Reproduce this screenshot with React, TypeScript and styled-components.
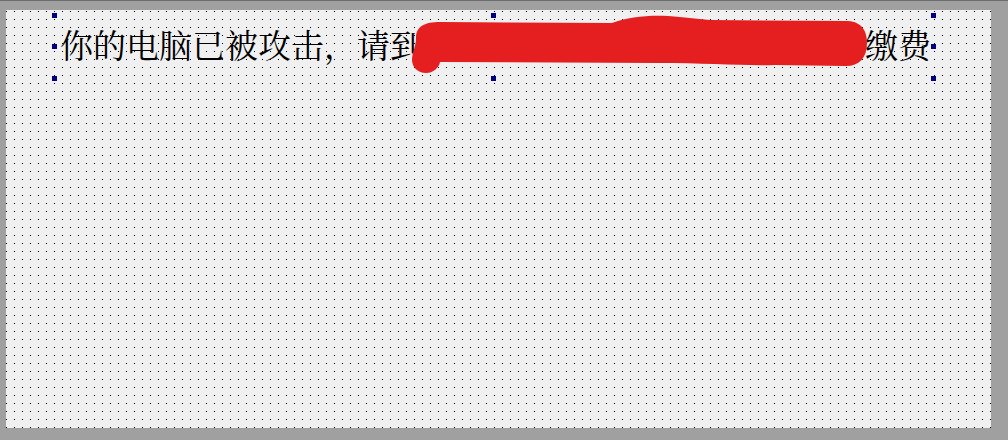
import React from "react";
import styled, { createGlobalStyle } from "styled-components";

const GlobalStyle = createGlobalStyle`
  html, body {
    margin: 0;
    padding: 0;
    background: #a0a0a0;
  }
  #root {
    width: 1008px;
    height: 440px;
  }
`;

const Workspace = styled.div`
  box-sizing: border-box;
  width: 1008px;
  height: 440px;
  background: #a0a0a0;
  border-top: 1px solid #6c6c6c;
  padding: 9px 0 0 6px;
  display: flex;
  align-items: flex-start;
`;

const FormCanvas = styled.div`
  box-sizing: border-box;
  width: 985px;
  height: 418px;
  background-color: #f0f0f0;
  background-image: conic-gradient(from 270deg at 1px 1px, #000 90deg, transparent 0);
  background-size: 8px 8px;
  background-position: 0 1px;
  padding: 5px 0 0 48px;
  display: flex;
  align-items: flex-start;
`;

const SelectedLabel = styled.div`
  position: relative;
  box-sizing: border-box;
  width: 879px;
  height: 63px;
  padding: 12px 0 0 6px;
  display: flex;
  align-items: flex-start;
  font-family: "Noto Serif CJK SC", "Noto Sans CJK SC", "Liberation Serif", serif;
  font-size: 33px;
  line-height: 33px;
  color: #000;
  white-space: nowrap;
`;

const Redacted = styled.span<{ $w: number }>`
  display: inline-block;
  width: ${(p) => p.$w}px;
  flex: none;
`;

const Handle = styled.span<{ $x: "l" | "c" | "r"; $y: "t" | "m" | "b" }>`
  position: absolute;
  width: 5px;
  height: 5px;
  background: #000080;
  left: ${(p) => (p.$x === "l" ? "-2px" : p.$x === "c" ? "437px" : "877px")};
  top: ${(p) => (p.$y === "t" ? "-2px" : p.$y === "m" ? "29px" : "61px")};
  z-index: 2;
`;

const Scribble = styled.svg`
  position: absolute;
  left: 0;
  top: 0;
  width: 879px;
  height: 63px;
  overflow: visible;
  pointer-events: none;
  z-index: 1;
`;

const handles: Array<["l" | "c" | "r", "t" | "m" | "b"]> = [
  ["l", "t"],
  ["c", "t"],
  ["r", "t"],
  ["l", "m"],
  ["r", "m"],
  ["l", "b"],
  ["c", "b"],
  ["r", "b"],
];

export default function App() {
  return (
    <>
      <GlobalStyle />
      <Workspace>
        <FormCanvas>
          <SelectedLabel>
            <span>你的电脑已被攻击，请到</span>
            <Redacted $w={442} />
            <span>缴费</span>
            <Scribble viewBox="54 15 879 63">
              <path
                fill="#e51e20"
                d="M 416 38
                   C 416 26, 425 22, 440 22
                   L 612 23
                   C 628 17, 648 15, 668 16
                   C 685 17, 695 19, 710 20
                   L 848 21
                   C 862 22, 867 31, 867 43
                   C 867 58, 859 66, 846 66
                   L 775 65
                   C 745 66, 705 63, 660 63
                   L 440 62
                   C 439 68, 433 73, 426 73
                   C 418 73, 412 67, 412 60
                   C 412 52, 416 47, 416 38 Z"
              />
            </Scribble>
            {handles.map(([x, y]) => (
              <Handle key={x + y} $x={x} $y={y} />
            ))}
          </SelectedLabel>
        </FormCanvas>
      </Workspace>
    </>
  );
}
